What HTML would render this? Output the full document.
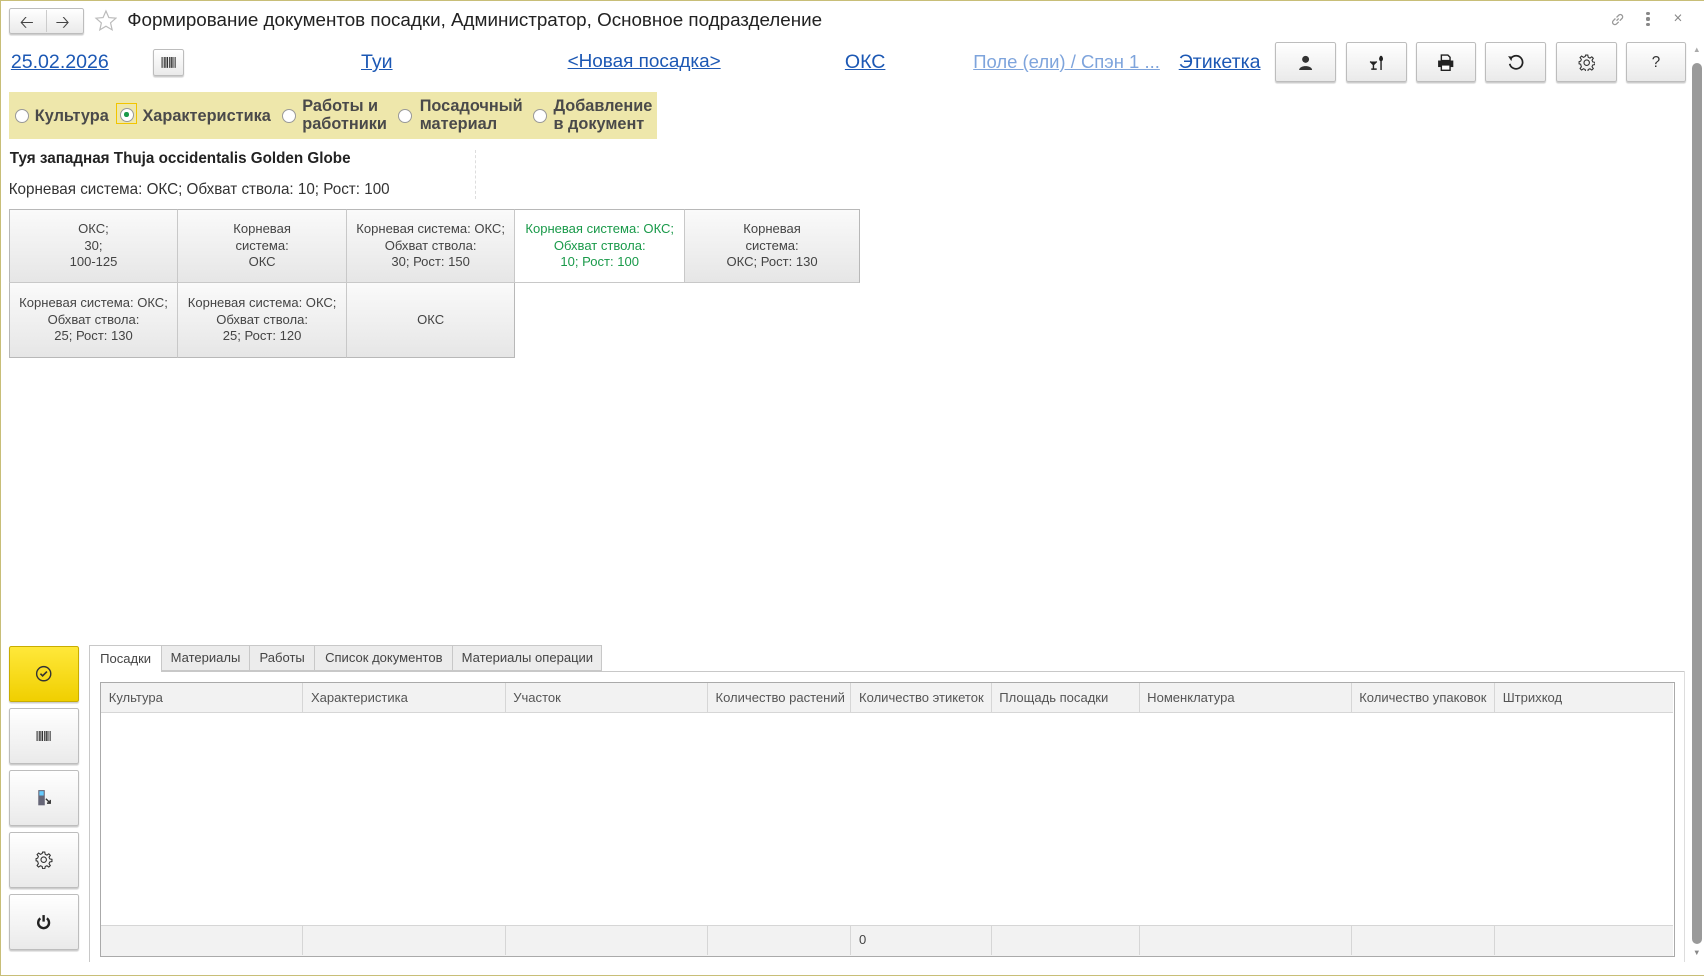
<!DOCTYPE html>
<html><head><meta charset="utf-8"><style>
html,body{margin:0;padding:0}
html{zoom:1.08737}
body{width:1568px;height:898px;position:relative;overflow:hidden;background:#fff;font-family:"Liberation Sans",Arial,sans-serif;color:#333}
.a{position:absolute}
.frame{left:0;top:0;width:1566px;height:896px;border:1px solid #c8be78;border-right:none}
.btn{position:absolute;background:linear-gradient(#fff,#eaeaea);border:1px solid #bdbdbd;border-radius:2px;box-shadow:0 1px 1px rgba(0,0,0,.2);display:flex;align-items:center;justify-content:center;font-size:14px;color:#333}
.lnk{position:absolute;top:47px;font-size:18px;color:#1c58b4;text-decoration:underline;white-space:nowrap}
.cell{position:absolute;box-sizing:border-box;background:linear-gradient(#fafafa,#e6e6e6);border-right:1px solid #c8c8c8;border-bottom:1px solid #c8c8c8;display:flex;align-items:center;justify-content:center;text-align:center;font-size:12px;color:#444;line-height:15px}
.rad{position:absolute;width:11px;height:11px;border:1px solid #999;border-radius:50%;background:#fff}
.rl{position:absolute;font-size:15px;font-weight:bold;color:#4a4a4a;line-height:17px}
.tab{position:absolute;top:593px;height:24px;box-sizing:border-box;border:1px solid #c8c8c8;background:#ececec;font-size:12px;color:#444;display:flex;align-items:center;justify-content:center}
.th{position:absolute;top:628px;height:27px;font-size:12px;color:#555;line-height:27px;padding-left:7px;box-sizing:border-box;border-right:1px solid #d6d6d6}
.tf{position:absolute;top:851px;height:27px;border-right:1px solid #d6d6d6;box-sizing:border-box;font-size:12px;color:#444;line-height:27px;padding-left:7px}
</style></head><body>
<div class="a frame"></div>
<!-- nav -->
<div class="btn" style="left:8px;top:7px;width:67px;height:22px;padding:0"></div>
<div class="a" style="left:42px;top:9px;width:1px;height:20px;background:#ccc"></div>
<div class="a" style="left:18px;top:8px;font-size:16px;color:#444">&#129120;</div>
<div class="a" style="left:51px;top:8px;font-size:16px;color:#444">&#129122;</div>
<svg class="a" style="left:86px;top:8px" width="22" height="22" viewBox="0 0 24 24"><path d="M12 2l2.9 6.6 7.1.6-5.4 4.7 1.6 7L12 17.3 5.8 21l1.6-7L2 9.2l7.1-.6z" fill="none" stroke="#bbb" stroke-width="1.2"/></svg>
<div class="a" style="left:117px;top:8px;font-size:17.3px;color:#222">Формирование документов посадки, Администратор, Основное подразделение</div>
<svg class="a" style="left:1481px;top:11px" width="14" height="14" viewBox="0 0 14 14"><path d="M6 8l2-2M5 6L3 8a2 2 0 003 3l2-2M9 8l2-2a2 2 0 00-3-3L6 5" stroke="#999" fill="none" stroke-width="1.2"/></svg>
<div class="a" style="left:1514px;top:11px;width:3px;font-size:0"><div style="width:3px;height:3px;background:#888;border-radius:50%;margin-bottom:2px"></div><div style="width:3px;height:3px;background:#888;border-radius:50%;margin-bottom:2px"></div><div style="width:3px;height:3px;background:#888;border-radius:50%"></div></div>
<div class="a" style="left:1539px;top:9px;font-size:14px;color:#888">×</div>
<!-- row 2 -->
<div class="lnk" style="left:10px">25.02.2026</div>
<div class="btn" style="left:141px;top:45px;width:26px;height:23px"><svg width="14" height="10"><path d="M1 0v10M3 0v10M4.5 0v10M6 0v10M8 0v10M9.5 0v10M11 0v10M13 0v10" stroke="#333" stroke-width="1"/></svg></div>
<div class="lnk" style="left:332px">Туи</div>
<div class="lnk" style="left:522px;font-size:17.4px">&lt;Новая посадка&gt;</div>
<div class="lnk" style="left:777px">ОКС</div>
<div class="lnk" style="left:895px;color:#7ea4dc;font-size:17px">Поле (ели) / Спэн 1 ...</div>
<div class="lnk" style="left:1084px">Этикетка</div>
<div class="btn" style="left:1173px;top:39px;width:54px;height:35px"><svg width="14" height="14"><circle cx="7" cy="4" r="3.2" fill="#333"/><path d="M1 14c0-5 12-5 12 0z" fill="#333"/></svg></div>
<div class="btn" style="left:1238px;top:39px;width:54px;height:35px"><svg width="16" height="14"><path d="M2 6l3 3 3-3M5 9v4M3 13h5M12 1c-2 2-1 4 0 4s2-2 0-4M12 5v9" stroke="#222" fill="#222" stroke-width="1.3"/></svg></div>
<div class="btn" style="left:1302px;top:39px;width:54px;height:35px"><svg width="16" height="16"><path d="M4 1h6l2 2v3H4z" fill="none" stroke="#222" stroke-width="1.3"/><rect x="1" y="6" width="14" height="6" fill="#222"/><rect x="4" y="10" width="8" height="5" fill="#fff" stroke="#222" stroke-width="1.3"/></svg></div>
<div class="btn" style="left:1366px;top:39px;width:54px;height:35px"><svg width="16" height="16"><path d="M4 3.5A6 6 0 1 1 2.5 9" fill="none" stroke="#222" stroke-width="1.6"/><path d="M1 2l4 .5-1 4z" fill="#222"/></svg></div>
<div class="btn" style="left:1431px;top:39px;width:54px;height:35px"><svg width="16" height="16" viewBox="0 0 16 16"><circle cx="8" cy="8" r="2.5" fill="none" stroke="#333"/><path d="M7 1h2l.4 2 1.6.8 1.7-1.2 1.4 1.4-1.2 1.7.7 1.6 2 .4v2l-2 .4-.7 1.6 1.2 1.7-1.4 1.4-1.7-1.2-1.6.7-.4 2H7l-.4-2-1.6-.7-1.7 1.2-1.4-1.4 1.2-1.7L2.4 9.4 1 9V7l1.4-.4.7-1.6-1.2-1.7 1.4-1.4 1.7 1.2 1.6-.8z" fill="none" stroke="#333"/></svg></div>
<div class="btn" style="left:1495px;top:39px;width:54px;height:35px">?</div>
<!-- scrollbar -->
<div class="a" style="left:1556px;top:58px;width:9px;height:810px;background:#9a9a9a;border-radius:5px"></div>
<div class="a" style="left:1557px;top:41px;font-size:7px;color:#aaa">▲</div>
<div class="a" style="left:1557px;top:872px;font-size:7px;color:#888">▼</div>
<!-- radio panel -->
<div class="a" style="left:8px;top:85px;width:596px;height:43px;background:#eee7ab"></div>
<div class="rad" style="left:14px;top:100px"></div><div class="rl" style="left:32px;top:98px">Культура</div>
<div class="a" style="left:107px;top:95px;width:19px;height:19px;border:1px solid #f2c500;box-sizing:border-box"></div>
<div class="rad" style="left:110px;top:99px"><div style="width:4px;height:4px;background:#1a9a4a;border-radius:50%;margin:3.5px"></div></div>
<div class="rl" style="left:131px;top:98px">Характеристика</div>
<div class="rad" style="left:259px;top:100px"></div><div class="rl" style="left:278px;top:89px">Работы и<br>работники</div>
<div class="rad" style="left:366px;top:100px"></div><div class="rl" style="left:386px;top:89px">Посадочный<br>материал</div>
<div class="rad" style="left:490px;top:100px"></div><div class="rl" style="left:509px;top:89px">Добавление<br>в документ</div>
<!-- headings -->
<div class="a" style="left:9px;top:138px;font-size:14px;font-weight:bold;color:#222">Туя западная Thuja occidentalis Golden Globe</div>
<div class="a" style="left:437px;top:138px;height:45px;border-left:1px dashed #ddd"></div>
<div class="a" style="left:8px;top:166px;font-size:14px;color:#333">Корневая система: ОКС; Обхват ствола: 10; Рост: 100</div>
<!-- grid -->
<div class="cell" style="left:8px;top:192px;width:156px;height:68px;border-left:1px solid #b8b8b8;border-top:1px solid #b8b8b8">ОКС;<br>30;<br>100-125</div>
<div class="cell" style="left:164px;top:192px;width:155px;height:68px;border-top:1px solid #b8b8b8">Корневая<br>система:<br>ОКС</div>
<div class="cell" style="left:319px;top:192px;width:155px;height:68px;border-top:1px solid #b8b8b8">Корневая система: ОКС;<br>Обхват ствола:<br>30; Рост: 150</div>
<div class="cell" style="left:474px;top:192px;width:156px;height:68px;background:#fff;color:#1a9a4a;border-top:1px solid #b8b8b8">Корневая система: ОКС;<br>Обхват ствола:<br>10; Рост: 100</div>
<div class="cell" style="left:630px;top:192px;width:161px;height:68px;border-top:1px solid #b8b8b8;border-right:1px solid #b8b8b8">Корневая<br>система:<br>ОКС; Рост: 130</div>
<div class="cell" style="left:8px;top:260px;width:156px;height:69px;border-left:1px solid #b8b8b8;border-bottom:1px solid #b8b8b8">Корневая система: ОКС;<br>Обхват ствола:<br>25; Рост: 130</div>
<div class="cell" style="left:164px;top:260px;width:155px;height:69px;border-bottom:1px solid #b8b8b8">Корневая система: ОКС;<br>Обхват ствола:<br>25; Рост: 120</div>
<div class="cell" style="left:319px;top:260px;width:155px;height:69px;border-right:1px solid #b8b8b8;border-bottom:1px solid #b8b8b8">ОКС</div>
<!-- left buttons -->
<div class="btn" style="left:8px;top:594px;width:63px;height:50px;background:linear-gradient(#ffe83a,#f0cf00);border-color:#c8ad00"><svg width="16" height="16"><circle cx="8" cy="8" r="6.5" fill="none" stroke="#333" stroke-width="1.3"/><path d="M5 8l2 2 4-4" fill="none" stroke="#333" stroke-width="1.5"/></svg></div>
<div class="btn" style="left:8px;top:651px;width:63px;height:50px"><svg width="14" height="10"><path d="M1 0v10M3 0v10M4.5 0v10M6 0v10M8 0v10M9.5 0v10M11 0v10M13 0v10" stroke="#333"/></svg></div>
<div class="btn" style="left:8px;top:708px;width:63px;height:50px"><svg width="16" height="16"><rect x="3" y="1" width="6" height="14" fill="#667" /><rect x="4" y="2" width="4" height="4" fill="#6cf"/><path d="M10 9l4 4M14 10v3h-3" stroke="#333" fill="none" stroke-width="1.3"/></svg></div>
<div class="btn" style="left:8px;top:765px;width:63px;height:50px"><svg width="16" height="16" viewBox="0 0 16 16"><circle cx="8" cy="8" r="2.5" fill="none" stroke="#333"/><path d="M7 1h2l.4 2 1.6.8 1.7-1.2 1.4 1.4-1.2 1.7.7 1.6 2 .4v2l-2 .4-.7 1.6 1.2 1.7-1.4 1.4-1.7-1.2-1.6.7-.4 2H7l-.4-2-1.6-.7-1.7 1.2-1.4-1.4 1.2-1.7L2.4 9.4 1 9V7l1.4-.4.7-1.6-1.2-1.7 1.4-1.4 1.7 1.2 1.6-.8z" fill="none" stroke="#333"/></svg></div>
<div class="btn" style="left:8px;top:822px;width:63px;height:50px"><svg width="14" height="14"><path d="M4 4a5 5 0 1 0 6 0" fill="none" stroke="#222" stroke-width="2.2"/><path d="M7 1v6" stroke="#222" stroke-width="2.2"/></svg></div>
<!-- tabs -->
<div class="a" style="left:82px;top:617px;width:1468px;height:1px;background:#c8c8c8"></div>
<div class="a" style="left:82px;top:617px;width:1px;height:268px;background:#c8c8c8"></div>
<div class="a" style="left:1549px;top:617px;width:1px;height:268px;background:#ddd"></div>
<div class="tab" style="left:82px;width:67px;background:#fff;border-bottom:none;height:25px">Посадки</div>
<div class="tab" style="left:148px;width:82px">Материалы</div>
<div class="tab" style="left:229px;width:61px">Работы</div>
<div class="tab" style="left:289px;width:128px">Список документов</div>
<div class="tab" style="left:416px;width:138px">Материалы операции</div>
<!-- table -->
<div class="a" style="left:93px;top:628px;width:1446px;height:27px;background:#f2f2f2;border-bottom:1px solid #d6d6d6"></div>
<div class="a" style="left:93px;top:851px;width:1446px;height:27px;background:#f2f2f2;border-top:1px solid #d6d6d6"></div>
<div class="th" style="left:93px;width:186px">Культура</div>
<div class="th" style="left:279px;width:186px">Характеристика</div>
<div class="th" style="left:465px;width:186px">Участок</div>
<div class="th" style="left:651px;width:132px">Количество растений</div>
<div class="th" style="left:783px;width:129px">Количество этикеток</div>
<div class="th" style="left:912px;width:136px">Площадь посадки</div>
<div class="th" style="left:1048px;width:195px">Номенклатура</div>
<div class="th" style="left:1243px;width:132px">Количество упаковок</div>
<div class="th" style="left:1375px;width:164px;border-right:none">Штрихкод</div>
<div class="tf" style="left:93px;width:186px"></div>
<div class="tf" style="left:279px;width:186px"></div>
<div class="tf" style="left:465px;width:186px"></div>
<div class="tf" style="left:651px;width:132px"></div>
<div class="tf" style="left:783px;width:129px">0</div>
<div class="tf" style="left:912px;width:136px"></div>
<div class="tf" style="left:1048px;width:195px"></div>
<div class="tf" style="left:1243px;width:132px"></div>
<div class="a" style="left:92px;top:627px;width:1448px;height:253px;border:1px solid #aaa;box-sizing:border-box"></div>
</body></html>
